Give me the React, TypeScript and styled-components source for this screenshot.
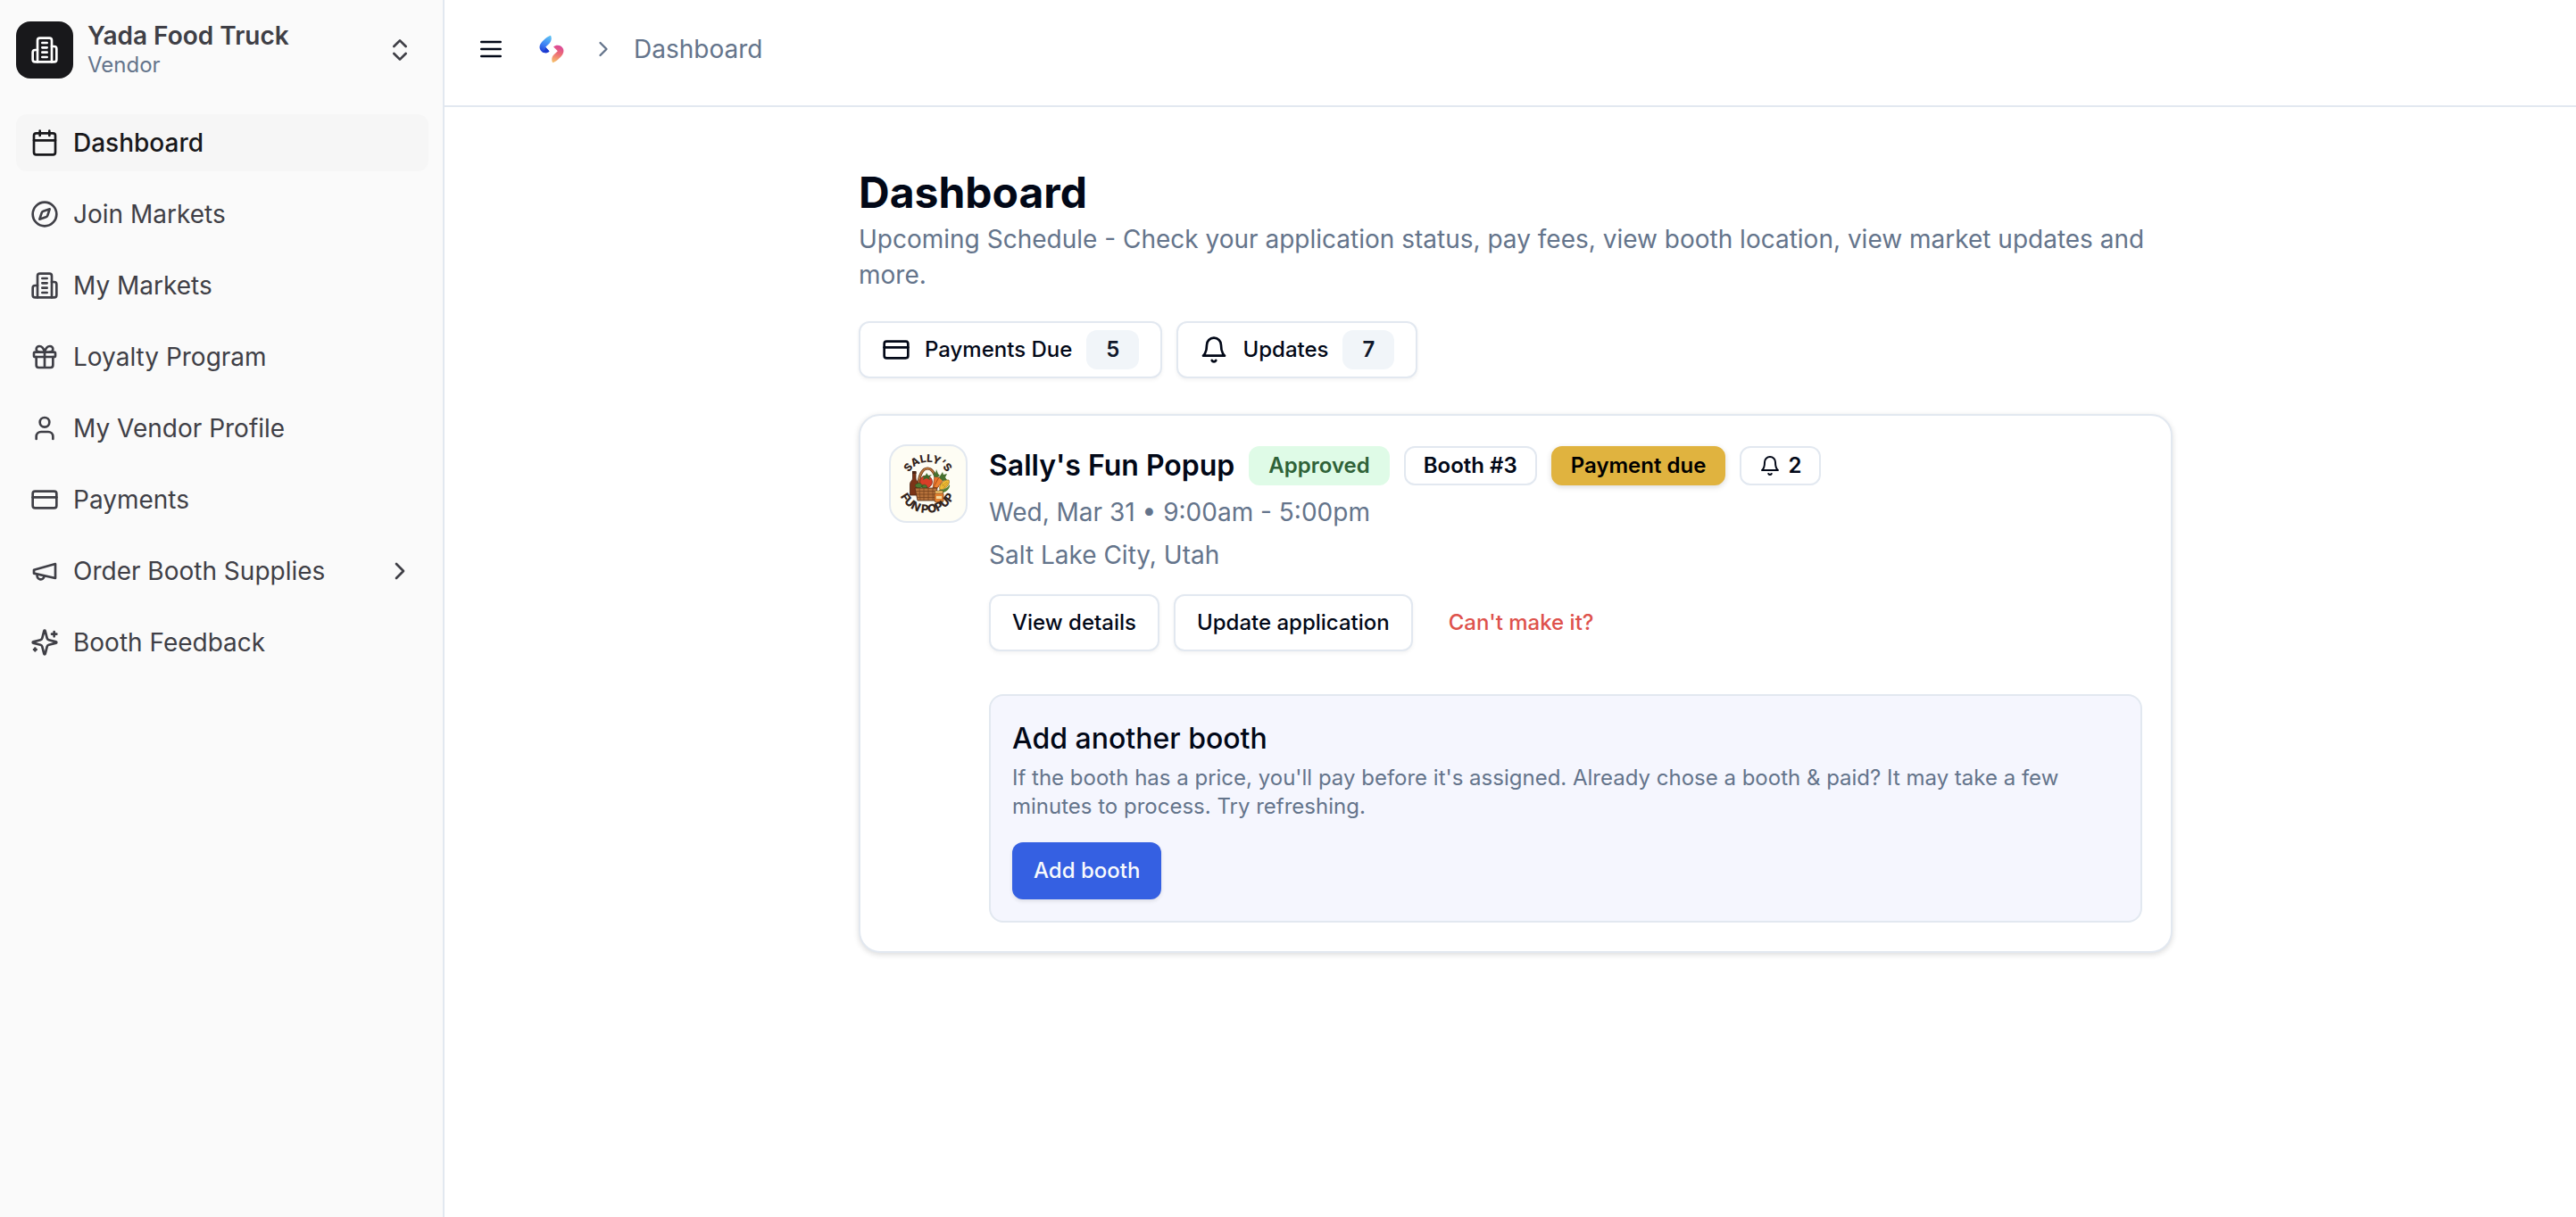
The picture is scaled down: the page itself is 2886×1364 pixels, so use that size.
import React from "react";
import styled, { createGlobalStyle, css } from "styled-components";

const color = {
  ink: "#020817",
  muted: "#64748b",
  line: "#e2e8f0",
  sidebar: "#fafafa",
  sidebarText: "#3f3f46",
  sidebarActive: "#18181b",
  sidebarHover: "#f6f6f6",
  primary: "#3560e2",
  danger: "#de524c",
  warning: "#e0b33f",
  successBg: "#dffbe7",
  successText: "#2f6238",
  panel: "#f5f6fe",
};

const GlobalStyle = createGlobalStyle`
  *, *::before, *::after { box-sizing: border-box; }
  body {
    margin: 0;
    background: #ffffff;
    color: ${color.ink};
    font-family: Inter, "Liberation Sans", sans-serif;
    font-size: 28px;
    line-height: 40px;
  }
  h1, h2, h3, p, ul { margin: 0; padding: 0; }
  button { font: inherit; color: inherit; cursor: pointer; }
  a { color: inherit; text-decoration: none; }
`;

/* ---------- icons ---------- */

const IconSvg = styled.svg<{ $size: number }>`
  display: block;
  flex: none;
  width: ${(p) => p.$size}px;
  height: ${(p) => p.$size}px;
  fill: none;
  stroke: currentColor;
  stroke-width: 2;
  stroke-linecap: round;
  stroke-linejoin: round;
`;

const shapes = {
  building: (
    <>
      <path d="M6 22V4a2 2 0 0 1 2-2h8a2 2 0 0 1 2 2v18Z" />
      <path d="M6 12H4a2 2 0 0 0-2 2v6a2 2 0 0 0 2 2h2" />
      <path d="M18 9h2a2 2 0 0 1 2 2v9a2 2 0 0 1-2 2h-2" />
      <path d="M10 6h4M10 10h4M10 14h4M10 18h4" />
    </>
  ),
  calendar: (
    <>
      <path d="M8 2v4M16 2v4M3 10h18" />
      <rect width="18" height="18" x="3" y="4" rx="2" />
    </>
  ),
  compass: (
    <>
      <path d="m16.24 7.76-1.804 5.411a2 2 0 0 1-1.265 1.265L7.76 16.24l1.804-5.411a2 2 0 0 1 1.265-1.265z" />
      <circle cx="12" cy="12" r="10" />
    </>
  ),
  gift: (
    <>
      <rect x="3" y="8" width="18" height="4" rx="1" />
      <path d="M12 8v13M19 12v7a2 2 0 0 1-2 2H7a2 2 0 0 1-2-2v-7" />
      <path d="M7.5 8a2.5 2.5 0 0 1 0-5A4.8 8 0 0 1 12 8a4.8 8 0 0 1 4.5-5 2.5 2.5 0 0 1 0 5" />
    </>
  ),
  user: (
    <>
      <path d="M19 21v-2a4 4 0 0 0-4-4H9a4 4 0 0 0-4 4v2" />
      <circle cx="12" cy="7" r="4" />
    </>
  ),
  card: (
    <>
      <rect width="20" height="14" x="2" y="5" rx="2" />
      <path d="M2 10h20" />
    </>
  ),
  megaphone: (
    <>
      <path d="m3 11 18-5v12L3 14v-3z" />
      <path d="M11.6 16.8a3 3 0 1 1-5.8-1.6" />
    </>
  ),
  sparkles: (
    <>
      <path d="M9.937 15.5A2 2 0 0 0 8.5 14.063l-6.135-1.582a.5.5 0 0 1 0-.962L8.5 9.936A2 2 0 0 0 9.937 8.5l1.582-6.135a.5.5 0 0 1 .963 0L14.063 8.5A2 2 0 0 0 15.5 9.937l6.135 1.581a.5.5 0 0 1 0 .964L15.5 14.063a2 2 0 0 0-1.437 1.437l-1.582 6.135a.5.5 0 0 1-.963 0z" />
      <path d="M20 3v4M22 5h-4M4 17v2M5 18H3" />
    </>
  ),
  bell: (
    <>
      <path d="M6 8a6 6 0 0 1 12 0c0 7 3 9 3 9H3s3-2 3-9" />
      <path d="M10.3 21a1.94 1.94 0 0 0 3.4 0" />
    </>
  ),
  menu: <path d="M4 6h16M4 12h16M4 18h16" />,
  chevronRight: <path d="m9 18 6-6-6-6" />,
  chevronsUpDown: <path d="m7 15 5 5 5-5M7 9l5-5 5 5" />,
};

type IconName = keyof typeof shapes;

const Icon = ({ name, size = 32 }: { name: IconName; size?: number }) => (
  <IconSvg $size={size} viewBox="0 0 24 24" aria-hidden="true">
    {shapes[name]}
  </IconSvg>
);

/* ---------- shell ---------- */

const Shell = styled.div`
  display: grid;
  grid-template-columns: 498px minmax(0, 1fr);
  min-height: 100vh;
`;

const Sidebar = styled.aside`
  display: flex;
  flex-direction: column;
  gap: 40px;
  padding: 24px 16px 24px 18px;
  background: ${color.sidebar};
  border-right: 2px solid ${color.line};
  color: ${color.sidebarText};
`;

const Switcher = styled.button`
  display: flex;
  align-items: center;
  gap: 16px;
  width: 100%;
  height: 64px;
  padding: 0 16px 0 0;
  border: 0;
  background: none;
  text-align: left;
`;

const SwitcherBadge = styled.span`
  display: grid;
  place-items: center;
  width: 64px;
  height: 64px;
  border-radius: 16px;
  background: ${color.sidebarActive};
  color: #ffffff;
`;

const SwitcherText = styled.span`
  display: flex;
  flex: 1;
  flex-direction: column;
`;

const VendorName = styled.span`
  font-weight: 600;
  line-height: 34px;
`;

const VendorRole = styled.span`
  color: ${color.muted};
  font-size: 24px;
  line-height: 32px;
`;

const NavList = styled.ul`
  display: flex;
  flex-direction: column;
  gap: 16px;
  list-style: none;
`;

const NavLink = styled.a<{ $active?: boolean }>`
  display: flex;
  align-items: center;
  gap: 16px;
  height: 64px;
  padding: 0 16px;
  border-radius: 12px;
  ${(p) =>
    p.$active &&
    css`
      background: ${color.sidebarHover};
      color: ${color.sidebarActive};
      font-weight: 500;
    `}
`;

const NavLabel = styled.span`
  flex: 1;
`;

const TopBar = styled.header`
  display: flex;
  align-items: center;
  gap: 16px;
  height: 120px;
  padding: 0 24px 8px;
  border-bottom: 2px solid ${color.line};
`;

const MenuButton = styled.button`
  display: grid;
  place-items: center;
  width: 56px;
  height: 56px;
  padding: 0;
  border: 0;
  background: none;
`;

const Breadcrumb = styled.nav`
  display: flex;
  align-items: center;
  gap: 20px;
  color: ${color.muted};
`;

const HomeLink = styled.a`
  display: grid;
  place-items: center;
  width: 48px;
  height: 48px;
`;

const BrandSvg = styled.svg`
  display: block;
  width: 32px;
  height: 32px;
`;

/* ---------- page ---------- */

const Main = styled.main`
  padding: 64px 32px 64px 44px;
`;

const Column = styled.div`
  display: flex;
  flex-direction: column;
  max-width: 1472px;
  margin: 0 auto;
`;

const PageTitle = styled.h1`
  font-size: 48px;
  font-weight: 700;
  line-height: 64px;
`;

const Muted = styled.p`
  color: ${color.muted};
`;

const ButtonRow = styled.div<{ $top: number }>`
  display: flex;
  flex-wrap: wrap;
  gap: 16px;
  margin-top: ${(p) => p.$top}px;
`;

const Button = styled.button<{ $kind?: "outline" | "primary" | "danger" }>`
  display: inline-flex;
  align-items: center;
  gap: 16px;
  height: 64px;
  padding: 0 24px;
  border: 0;
  border-radius: 12px;
  background: none;
  font-size: 24px;
  font-weight: 500;
  line-height: 32px;
  white-space: nowrap;
  ${(p) =>
    p.$kind === "outline" &&
    css`
      border: 2px solid ${color.line};
      background: #ffffff;
      box-shadow: 0 2px 4px rgba(0, 0, 0, 0.05);
    `}
  ${(p) =>
    p.$kind === "primary" &&
    css`
      background: ${color.primary};
      color: #f8fafc;
      box-shadow: 0 2px 4px rgba(0, 0, 0, 0.1);
    `}
  ${(p) =>
    p.$kind === "danger" &&
    css`
      color: ${color.danger};
    `}
`;

const Badge = styled.span<{ $tone: "outline" | "count" | "success" | "warning" }>`
  display: inline-flex;
  align-items: center;
  gap: 8px;
  height: 44px;
  padding: 0 20px;
  border: 2px solid transparent;
  border-radius: 12px;
  font-size: 24px;
  font-weight: 600;
  line-height: 32px;
  white-space: nowrap;
  ${(p) => p.$tone === "outline" && css`border-color: ${color.line};`}
  ${(p) => p.$tone === "count" && css`background: #f1f5f9; color: #0f172a;`}
  ${(p) =>
    p.$tone === "success" &&
    css`background: ${color.successBg}; color: ${color.successText};`}
  ${(p) =>
    p.$tone === "warning" &&
    css`
      border-color: ${color.warning};
      background: ${color.warning};
      color: #000000;
      box-shadow: 0 2px 6px rgba(0, 0, 0, 0.15);
    `}
`;

const Card = styled.article`
  display: flex;
  align-items: flex-start;
  gap: 24px;
  margin-top: 40px;
  padding: 32px;
  border: 2px solid ${color.line};
  border-radius: 24px;
  background: #ffffff;
  box-shadow: 0 2px 6px rgba(0, 0, 0, 0.14);
`;

const MarketLogo = styled.div`
  flex: none;
  width: 88px;
  height: 88px;
  overflow: hidden;
  border: 2px solid ${color.line};
  border-radius: 20px;
  background: #fefdf4;
`;

const CardBody = styled.div`
  flex: 1;
  min-width: 0;
`;

const CardHeading = styled.div`
  display: flex;
  flex-wrap: wrap;
  align-items: center;
  gap: 16px;
`;

const Facts = styled.div`
  display: grid;
  gap: 8px;
  margin-top: 8px;
`;

const MarketName = styled.h2`
  font-size: 32px;
  font-weight: 600;
  line-height: 48px;
`;

const Panel = styled.section`
  margin-top: 48px;
  padding: 24px;
  border: 2px solid ${color.line};
  border-radius: 16px;
  background: ${color.panel};
`;

const PanelTitle = styled.h3`
  font-size: 32px;
  font-weight: 500;
  line-height: 48px;
`;

const PanelText = styled(Muted)`
  margin-top: 4px;
  font-size: 24px;
  line-height: 32px;
`;

const LogoText = styled.text`
  fill: #33241c;
  font-family: Inter, "Liberation Sans", sans-serif;
  font-weight: 800;
  text-anchor: middle;
`;

/* ---------- drawings ---------- */

const BrandMark = () => (
  <BrandSvg viewBox="0 0 32 32" aria-hidden="true">
    <defs>
      <linearGradient id="brandBlue" x1="0.7" y1="0" x2="0.4" y2="1">
        <stop offset="0" stopColor="#5cc0f3" />
        <stop offset="0.55" stopColor="#3f83f5" />
        <stop offset="1" stopColor="#1f3fd6" />
      </linearGradient>
      <linearGradient id="brandWarm" x1="0.5" y1="0" x2="0.3" y2="1">
        <stop offset="0" stopColor="#d9479a" />
        <stop offset="0.45" stopColor="#ec6a76" />
        <stop offset="1" stopColor="#f6bf6a" />
      </linearGradient>
    </defs>
    <path
      d="M15 .8C11.600 1.600 6 6.500 3.800 9.800C1.600 13.200 2.400 17 5.500 19.200C7.900 20.900 11.500 20.700 13.500 18.600L9.200 13.800L13.900 9.200C16.200 6.600 16.200 3 15 .8Z"
      fill="url(#brandBlue)"
    />
    <path d="M9.200 13.800L13.500 18.600C11.500 20.700 7.900 20.900 5.500 19.200C7.600 18.600 9.200 16.800 9.200 13.800Z" fill="#1d3bd0" />
    <path
      d="M17.200 31.200C20.600 30.400 26 25.500 28.200 22.200C30.400 18.800 29.600 15 26.500 12.800C24.100 11.100 20.100 11.300 18.100 13.400L22.800 18.200L18.100 22.800C15.800 25.400 15.900 29 17.200 31.200Z"
      fill="url(#brandWarm)"
    />
  </BrandSvg>
);

const SallysLogo = () => (
  <svg viewBox="0 0 84 84" width="84" height="84" role="img" aria-label="Sally's Fun Popup logo">
    <defs>
      <path id="arcTop" d="M17 38 A25 25 0 0 1 66 38" />
      <path id="arcBottom" d="M7 41 A34 34 0 0 0 75 41" />
    </defs>
    <LogoText fontSize="12">
      <textPath href="#arcTop" startOffset="50%">SALLY’S</textPath>
    </LogoText>
    {/* basket handle */}
    <path d="M31 46C31 18 51 18 52 46" fill="none" stroke="#5a2f17" strokeWidth="3.200" />
    <path d="M31 46C31 18 51 18 52 46" fill="none" stroke="#b8743a" strokeWidth="1.800" />
    {/* bottle */}
    <path d="M24.500 29h3.500v7c0 3 3 3 3 7v12H21.500V43c0-4 3-4 3-7z" fill="#7b3417" stroke="#4a2313" strokeWidth=".8" />
    <path d="M24 28h4.500v3H24z" fill="#4b2414" />
    {/* carrots */}
    <path d="M49 34l5 1-2 12h-5z" fill="#e8722a" stroke="#7a3514" strokeWidth=".6" />
    <path d="M54 35l5 3-7 9-4-1z" fill="#ef8130" stroke="#7a3514" strokeWidth=".6" />
    <path d="M48 34l0-6 2 3 1-5 2 5 2 2-3 2zM54 35l4-6 1 3 4-1-2 4 2 3-5 1z" fill="#47702f" />
    {/* corn */}
    <path d="M65 38c2 4-3 11-10 11-2-5 4-12 10-11z" fill="#efbd35" stroke="#8a5a16" strokeWidth=".7" />
    <path d="M66 43c1 4-4 9-10 10l-2-4c6 0 9-2 12-6z" fill="#557f32" />
    <path d="M57 45l6-5M59 47l5-6M57 42l4 4" stroke="#b77f1e" strokeWidth=".6" />
    {/* tomato */}
    <circle cx="39.500" cy="40" r="7" fill="#d83e27" stroke="#71200f" strokeWidth=".7" />
    <path d="M35 34l4-1 1-3 2 3 4-1-3 3 1 3-4-2-4 2 1-3z" fill="#3d6a2c" />
    {/* greens */}
    <path d="M27 44c4-4 7-3 9 1-3 3-7 3-9-1zM34 45c3-3 6-2 7 1-3 3-5 2-7-1z" fill="#4c7a31" stroke="#26461a" strokeWidth=".5" />
    {/* basket */}
    <path d="M27 47h25l-2 14H30z" fill="#b5713a" stroke="#4f2a15" strokeWidth=".8" />
    <path d="M28 50.500h23M29 54h22M29 57.500h21M32 47l1 14M37 47v14M42 47v14M47 47v14" stroke="#7a451f" strokeWidth=".8" />
    {/* jar */}
    <rect x="49" y="52" width="10" height="11" rx="2" fill="#e38332" stroke="#5c2f14" strokeWidth=".7" />
    <rect x="49.500" y="50" width="9" height="3" rx="1" fill="#f2c56b" stroke="#5c2f14" strokeWidth=".5" />
    <rect x="51" y="56" width="6" height="3" fill="#f4d9a0" />
    <LogoText fontSize="13">
      <textPath href="#arcBottom" startOffset="50%">FUN POPUP</textPath>
    </LogoText>
  </svg>
);

/* ---------- content ---------- */

const navItems: { icon: IconName; label: string; active?: boolean; expandable?: boolean }[] = [
  { icon: "calendar", label: "Dashboard", active: true },
  { icon: "compass", label: "Join Markets" },
  { icon: "building", label: "My Markets" },
  { icon: "gift", label: "Loyalty Program" },
  { icon: "user", label: "My Vendor Profile" },
  { icon: "card", label: "Payments" },
  { icon: "megaphone", label: "Order Booth Supplies", expandable: true },
  { icon: "sparkles", label: "Booth Feedback" },
];

export default function App() {
  return (
    <>
      <GlobalStyle />
      <Shell>
        <Sidebar>
          <Switcher type="button">
            <SwitcherBadge>
              <Icon name="building" />
            </SwitcherBadge>
            <SwitcherText>
              <VendorName>Yada Food Truck</VendorName>
              <VendorRole>Vendor</VendorRole>
            </SwitcherText>
            <Icon name="chevronsUpDown" />
          </Switcher>
          <nav>
            <NavList>
              {navItems.map((item) => (
                <li key={item.label}>
                  <NavLink href="#" $active={item.active} aria-current={item.active ? "page" : undefined}>
                    <Icon name={item.icon} />
                    <NavLabel>{item.label}</NavLabel>
                    {item.expandable && <Icon name="chevronRight" />}
                  </NavLink>
                </li>
              ))}
            </NavList>
          </nav>
        </Sidebar>

        <div>
          <TopBar>
            <MenuButton type="button" aria-label="Toggle sidebar">
              <Icon name="menu" />
            </MenuButton>
            <Breadcrumb aria-label="Breadcrumb">
              <HomeLink href="#" aria-label="Home">
                <BrandMark />
              </HomeLink>
              <Icon name="chevronRight" size={28} />
              <span>Dashboard</span>
            </Breadcrumb>
          </TopBar>

          <Main>
            <Column>
              <PageTitle>Dashboard</PageTitle>
              <Muted>
                Upcoming Schedule - Check your application status, pay fees, view booth location, view market
                updates and more.
              </Muted>
              <ButtonRow $top={32}>
                <Button type="button" $kind="outline">
                  <Icon name="card" />
                  Payments Due
                  <Badge $tone="count">5</Badge>
                </Button>
                <Button type="button" $kind="outline">
                  <Icon name="bell" />
                  Updates
                  <Badge $tone="count">7</Badge>
                </Button>
              </ButtonRow>

              <Card>
                <MarketLogo>
                  <SallysLogo />
                </MarketLogo>
                <CardBody>
                  <CardHeading>
                    <MarketName>Sally's Fun Popup</MarketName>
                    <Badge $tone="success">Approved</Badge>
                    <Badge $tone="outline">Booth #3</Badge>
                    <Badge $tone="warning">Payment due</Badge>
                    <Badge $tone="outline">
                      <Icon name="bell" size={24} />2
                    </Badge>
                  </CardHeading>
                  <Facts>
                    <Muted>Wed, Mar 31 • 9:00am - 5:00pm</Muted>
                    <Muted>Salt Lake City, Utah</Muted>
                  </Facts>
                  <ButtonRow $top={24}>
                    <Button type="button" $kind="outline">View details</Button>
                    <Button type="button" $kind="outline">Update application</Button>
                    <Button type="button" $kind="danger">Can't make it?</Button>
                  </ButtonRow>
                  <Panel>
                    <PanelTitle>Add another booth</PanelTitle>
                    <PanelText>
                      If the booth has a price, you'll pay before it's assigned. Already chose a booth &amp; paid? It
                      may take a few minutes to process. Try refreshing.
                    </PanelText>
                    <ButtonRow $top={24}>
                      <Button type="button" $kind="primary">Add booth</Button>
                    </ButtonRow>
                  </Panel>
                </CardBody>
              </Card>
            </Column>
          </Main>
        </div>
      </Shell>
    </>
  );
}
